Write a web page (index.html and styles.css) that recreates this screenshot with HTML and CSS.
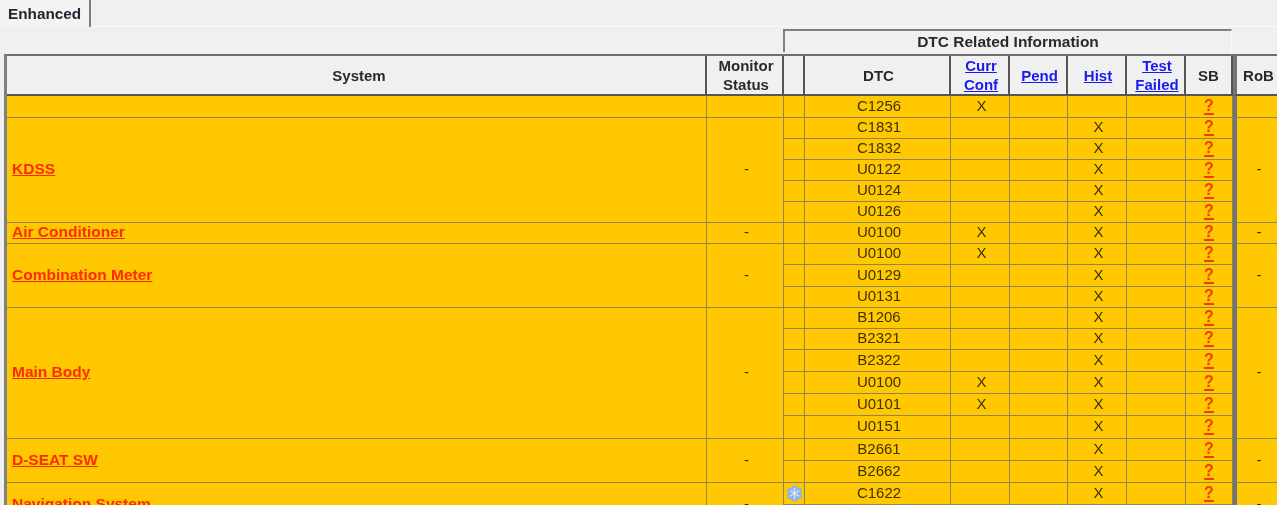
FILE: index.html
```html
<!DOCTYPE html>
<html lang="en">
<head>
<meta charset="utf-8">
<title>Enhanced</title>
<link rel="stylesheet" href="styles.css">
</head>
<body>
<div class="page">
  <div class="tabs"><div class="tab">Enhanced</div></div>
  <div class="group-row"><div class="group">DTC Related Information</div></div>
  <div class="table-clip">
    <table class="dtc">
      <colgroup>
        <col class="c-sys"><col class="c-mon"><col class="c-ico"><col class="c-dtc"><col class="c-cur"><col class="c-pen"><col class="c-his"><col class="c-tes"><col class="c-sb"><col class="c-rob">
      </colgroup>
      <thead>
        <tr>
          <th class="sys-head">System</th><th>Monitor<br>Status</th><th></th><th>DTC</th>
          <th><a class="lnk" href="#">Curr<br>Conf</a></th><th><a class="lnk" href="#">Pend</a></th><th><a class="lnk" href="#">Hist</a></th><th><a class="lnk" href="#">Test<br>Failed</a></th>
          <th class="sb">SB</th><th class="rob">RoB</th>
        </tr>
      </thead>
      <tbody>
        <tr class="r22"><td class="sys"></td><td></td><td></td><td>C1256</td><td>X</td><td></td><td></td><td></td><td class="sb"><a class="q" href="#">?</a></td><td class="rob"></td></tr>

        <tr class="r21"><td class="sys" rowspan="5"><a class="sl" href="#">KDSS</a></td><td rowspan="5">-</td><td></td><td>C1831</td><td></td><td></td><td>X</td><td></td><td class="sb"><a class="q" href="#">?</a></td><td class="rob" rowspan="5">-</td></tr>
        <tr class="r21"><td></td><td>C1832</td><td></td><td></td><td>X</td><td></td><td class="sb"><a class="q" href="#">?</a></td></tr>
        <tr class="r21"><td></td><td>U0122</td><td></td><td></td><td>X</td><td></td><td class="sb"><a class="q" href="#">?</a></td></tr>
        <tr class="r21"><td></td><td>U0124</td><td></td><td></td><td>X</td><td></td><td class="sb"><a class="q" href="#">?</a></td></tr>
        <tr class="r21"><td></td><td>U0126</td><td></td><td></td><td>X</td><td></td><td class="sb"><a class="q" href="#">?</a></td></tr>

        <tr class="r21"><td class="sys"><a class="sl" href="#">Air Conditioner</a></td><td>-</td><td></td><td>U0100</td><td>X</td><td></td><td>X</td><td></td><td class="sb"><a class="q" href="#">?</a></td><td class="rob">-</td></tr>

        <tr class="r21"><td class="sys" rowspan="3"><a class="sl" href="#">Combination Meter</a></td><td rowspan="3">-</td><td></td><td>U0100</td><td>X</td><td></td><td>X</td><td></td><td class="sb"><a class="q" href="#">?</a></td><td class="rob" rowspan="3">-</td></tr>
        <tr class="r22"><td></td><td>U0129</td><td></td><td></td><td>X</td><td></td><td class="sb"><a class="q" href="#">?</a></td></tr>
        <tr class="r21"><td></td><td>U0131</td><td></td><td></td><td>X</td><td></td><td class="sb"><a class="q" href="#">?</a></td></tr>

        <tr class="r21"><td class="sys" rowspan="6"><a class="sl" href="#">Main Body</a></td><td rowspan="6">-</td><td></td><td>B1206</td><td></td><td></td><td>X</td><td></td><td class="sb"><a class="q" href="#">?</a></td><td class="rob" rowspan="6">-</td></tr>
        <tr class="r21"><td></td><td>B2321</td><td></td><td></td><td>X</td><td></td><td class="sb"><a class="q" href="#">?</a></td></tr>
        <tr class="r22"><td></td><td>B2322</td><td></td><td></td><td>X</td><td></td><td class="sb"><a class="q" href="#">?</a></td></tr>
        <tr class="r22"><td></td><td>U0100</td><td>X</td><td></td><td>X</td><td></td><td class="sb"><a class="q" href="#">?</a></td></tr>
        <tr class="r22"><td></td><td>U0101</td><td>X</td><td></td><td>X</td><td></td><td class="sb"><a class="q" href="#">?</a></td></tr>
        <tr class="r23"><td></td><td>U0151</td><td></td><td></td><td>X</td><td></td><td class="sb"><a class="q" href="#">?</a></td></tr>

        <tr class="r22"><td class="sys" rowspan="2"><a class="sl" href="#">D-SEAT SW</a></td><td rowspan="2">-</td><td></td><td>B2661</td><td></td><td></td><td>X</td><td></td><td class="sb"><a class="q" href="#">?</a></td><td class="rob" rowspan="2">-</td></tr>
        <tr class="r22"><td></td><td>B2662</td><td></td><td></td><td>X</td><td></td><td class="sb"><a class="q" href="#">?</a></td></tr>

        <tr class="r22"><td class="sys" rowspan="2"><a class="sl" href="#">Navigation System</a></td><td rowspan="2">-</td><td class="ico"><svg class="flake" viewBox="0 0 16 16" aria-hidden="true"><g fill="#8fb4ea"><circle cx="8" cy="3.4" r="3"/><circle cx="8" cy="12.6" r="3"/><circle cx="4" cy="5.7" r="3"/><circle cx="12" cy="5.7" r="3"/><circle cx="4" cy="10.3" r="3"/><circle cx="12" cy="10.3" r="3"/></g><g stroke="#d9e6f8" stroke-width="1.2" stroke-linecap="round"><path d="M8 3v10"/><path d="M4 5.7l8 4.6"/><path d="M12 5.7l-8 4.6"/></g></svg></td><td>C1622</td><td></td><td></td><td>X</td><td></td><td class="sb"><a class="q" href="#">?</a></td><td class="rob" rowspan="2">-</td></tr>
        <tr class="r22"><td></td><td>C1623</td><td></td><td></td><td>X</td><td></td><td class="sb"><a class="q" href="#">?</a></td></tr>
      </tbody>
    </table>
  </div>
</div>
</body>
</html>
```

FILE: styles.css
```css
html, body {
  margin: 0;
  padding: 0;
  background: #ffffff;
}

.page {
  width: 1277px;
  height: 505px;
  overflow: hidden;
  background: #f0f0f0;
  font-family: "Liberation Sans", Arial, sans-serif;
  color: #2a2a2a;
  filter: blur(0.35px);
}

.tabs {
  height: 26px;
  border-bottom: 1px solid #fafafa;
  display: flex;
}

.tab {
  width: 81px;
  height: 27px;
  padding-left: 8px;
  border-right: 2px solid #7d7d7d;
  background: #f3f3f3;
  font-size: 15.3px;
  font-weight: bold;
  line-height: 27px;
  color: #23232f;
}

.group-row {
  height: 27px;
  padding: 2px 0 0 783px;
  box-sizing: border-box;
}

.group {
  width: 449px;
  height: 23px;
  box-sizing: border-box;
  border-top: 2px solid #808080;
  border-left: 2px solid #808080;
  border-right: 1px solid #fafafa;
  text-align: center;
  font-size: 15.5px;
  font-weight: bold;
  line-height: 21px;
}

.table-clip {
  height: 451px;
  overflow: hidden;
  padding-left: 4px;
}

.dtc {
  table-layout: fixed;
  width: 1275px;
  border-collapse: separate;
  border-spacing: 0;
  border-top: 2px solid #6f6f6f;
  border-left: 3px solid #808080;
  font-size: 15px;
}

.c-sys { width: 700px; }
.c-mon { width: 77px; }
.c-ico { width: 21px; }
.c-dtc { width: 146px; }
.c-cur { width: 59px; }
.c-pen { width: 58px; }
.c-his { width: 59px; }
.c-tes { width: 59px; }
.c-sb  { width: 47px; }
.c-rob { width: 49px; }

.dtc th {
  height: 37px;
  padding: 0 0 0 3px;
  background: #f0f0f0;
  border-right: 2px solid #555555;
  border-bottom: 2px solid #555555;
  font-size: 15px;
  line-height: 19px;
  font-weight: bold;
  color: #2a2a2a;
  text-align: center;
}

.dtc td {
  padding: 0 0 2px 3px;
  background: #ffc800;
  border-right: 1px solid #8f8550;
  border-bottom: 1px solid #8f8550;
  text-align: center;
  line-height: 16px;
  color: #3d3200;
  box-sizing: border-box;
  overflow: hidden;
  white-space: nowrap;
}

.r21 td { height: 21px; }
.r22 td { height: 22px; }
.r23 td { height: 23px; }

.dtc th.sys-head {
  padding-left: 6px;
}

.dtc td.sys {
  text-align: left;
  padding-left: 5px;
}

.dtc .sb {
  padding-left: 0;
}

.dtc th.rob,
.dtc td.rob {
  padding-left: 0;
  border-left: 4px solid #747474;
}

.dtc td.ico {
  padding: 0;
  line-height: 0;
}

.flake {
  width: 17px;
  height: 17px;
  vertical-align: middle;
}

.lnk {
  color: #1a1aee;
}

.sl {
  color: #ff2a00;
  font-weight: bold;
  font-size: 15.5px;
}

.q {
  color: #f53a00;
  font-weight: bold;
  font-size: 16px;
  line-height: 16px;
  text-underline-offset: 2px;
  text-decoration-thickness: 1.5px;
}
```
